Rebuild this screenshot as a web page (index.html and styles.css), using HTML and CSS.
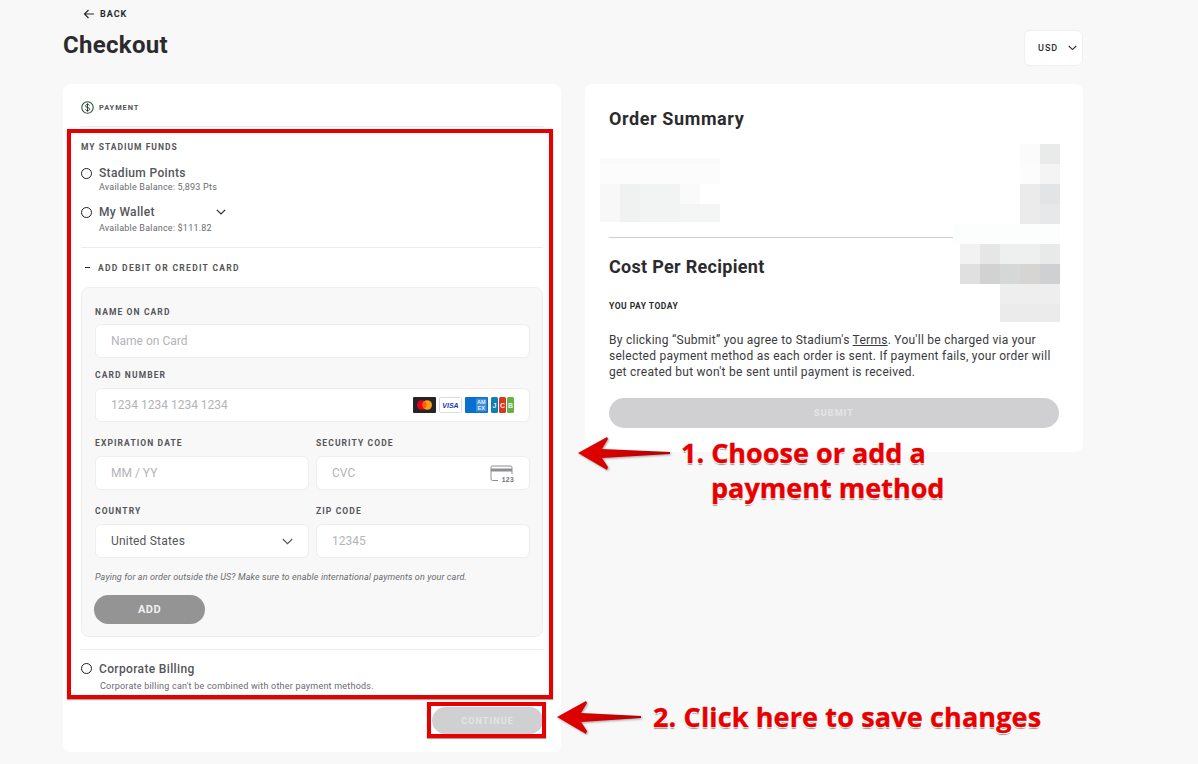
FILE: index.html
```html
<!DOCTYPE html>
<html lang="en">
    <head>
        <meta charset="UTF-8">
        <meta name="viewport" content="width=device-width, initial-scale=1.0">
        <title>Checkout</title>
        <link rel="stylesheet" href="styles.css">
    </head>
    <body>
        <div class="page">
            <a class="back-link" href="#">
                <svg width="12" height="12" viewBox="0 0 12 12" fill="none" stroke="#2b2b2e" stroke-width="1.2"><path d="M11 6H1.5M5.5 2L1.5 6l4 4"/></svg>
                BACK
            </a>
            <div class="page-header">
                <h1>Checkout</h1>
                <div class="currency">
                    USD
                    <svg width="9" height="6" viewBox="0 0 9 6" fill="none" stroke="#2b2b2e" stroke-width="1.1"><path d="M.8 1l3.7 3.6L8.2 1"/></svg>
                </div>
            </div>

            <div class="columns">
                <section class="card payment-card">
                    <div class="payment-head">
                        <svg width="13" height="13" viewBox="0 0 13 13" fill="none"><circle cx="6.5" cy="6.5" r="5.7" stroke="#1f5c3a" stroke-width="1.1"/><path d="M8.6 4.5C8.2 3.7 7.4 3.4 6.5 3.4c-1.1 0-2 .5-2 1.5 0 2.2 4.2 1 4.2 3.2 0 1-1 1.5-2.2 1.5-1 0-1.9-.4-2.2-1.2M6.5 2.3v8.4" stroke="#2b2b2e" stroke-width=".9"/></svg>
                        <span>PAYMENT</span>
                    </div>

                    <h3 class="funds-title">MY STADIUM FUNDS</h3>

                    <div class="option option-points">
                        <span class="radio"></span>
                        <div>
                            <div class="option-name">Stadium Points</div>
                            <div class="option-note">Available Balance: 5,893 Pts</div>
                        </div>
                    </div>

                    <div class="option option-wallet">
                        <span class="radio"></span>
                        <div>
                            <div class="option-name">My Wallet
                                <svg class="wallet-chevron" width="10" height="6" viewBox="0 0 10 6" fill="none" stroke="#2b2b2e" stroke-width="1.2"><path d="M.8.8L5 5l4.2-4.2"/></svg>
                            </div>
                            <div class="option-note wallet-note">Available Balance: $111.82</div>
                        </div>
                    </div>

                    <div class="add-card-toggle"><span class="minus"></span>ADD DEBIT OR CREDIT CARD</div>

                    <form class="card-panel">
                        <div class="field name-field">
                            <label>NAME ON CARD</label>
                            <div class="input placeholder">Name on Card</div>
                        </div>
                        <div class="field">
                            <label>CARD NUMBER</label>
                            <div class="input placeholder">
                                1234 1234 1234 1234
                                <div class="brands">
                                    <svg width="23" height="16" viewBox="0 0 23 16"><rect width="23" height="16" rx="1" fill="#252525"/><circle cx="8.8" cy="8" r="4.8" fill="#e8001c"/><circle cx="14.2" cy="8" r="4.8" fill="#f79e1b"/><path d="M11.5 4a4.8 4.8 0 0 1 0 8 4.8 4.800 0 0 1 0-8z" fill="#ff5f00"/></svg>
                                    <svg width="23" height="16" viewBox="0 0 23 16"><rect x=".5" y=".5" width="22" height="15" rx="1" fill="#fff" stroke="#ddd"/><text class="visa-mark" x="11.5" y="11">VISA</text></svg>
                                    <svg width="23" height="16" viewBox="0 0 23 16"><rect width="23" height="16" rx="1" fill="#0a70cf"/><rect x="11" y="1.5" width="10.500" height="13" fill="#3f8fdc"/><text class="amex-mark" x="16.200" y="7.200">AM</text><text class="amex-mark" x="16.200" y="13">EX</text></svg>
                                    <svg width="23" height="16" viewBox="0 0 23 16"><rect width="7" height="16" rx="1.5" fill="#0f7fb5"/><rect x="8" width="7" height="16" rx="1.5" fill="#d9381e"/><rect x="16" width="7" height="16" rx="1.5" fill="#64b245"/><text class="jcb-mark" x="3.500" y="10.500">J</text><text class="jcb-mark" x="11.500" y="10.500">C</text><text class="jcb-mark" x="19.500" y="10.500">B</text></svg>
                                </div>
                            </div>
                        </div>
                        <div class="field-row">
                            <div class="field">
                                <label>EXPIRATION DATE</label>
                                <div class="input placeholder">MM / YY</div>
                            </div>
                            <div class="field">
                                <label>SECURITY CODE</label>
                                <div class="input placeholder">
                                    CVC
                                    <svg class="cvc-icon" width="24" height="17" viewBox="0 0 24 17" fill="none"><path d="M8 15.5H2.500a1.500 1.500 0 0 1-1.500-1.500V2.500A1.500 1.500 0 0 1 2.500 1h18A1.500 1.500 0 0 1 22 2.500V9" stroke="#8d8d92"/><rect x="1" y="3.5" width="21" height="3" fill="#8d8d92"/><text class="cvc-digits" x="24" y="16.5">123</text></svg>
                                </div>
                            </div>
                        </div>
                        <div class="field-row">
                            <div class="field">
                                <label>COUNTRY</label>
                                <div class="input">
                                    United States
                                    <svg class="select-chevron" width="11" height="7" viewBox="0 0 11 7" fill="none" stroke="#55555a" stroke-width="1.1"><path d="M.8 1l4.7 4.7L10.200 1"/></svg>
                                </div>
                            </div>
                            <div class="field">
                                <label>ZIP CODE</label>
                                <div class="input placeholder">12345</div>
                            </div>
                        </div>
                        <p class="intl-note">Paying for an order outside the US? Make sure to enable international payments on your card.</p>
                        <button type="button" class="add-btn">ADD</button>
                    </form>

                    <div class="option option-corporate">
                        <span class="radio"></span>
                        <div class="option-name">Corporate Billing</div>
                    </div>
                    <div class="corporate-note">Corporate billing can't be combined with other payment methods.</div>

                    <div class="continue-row">
                        <button type="button" class="continue-btn">CONTINUE</button>
                    </div>
                </section>

                <section class="card summary-card">
                    <h2 class="summary-title">Order Summary</h2>
                    <hr class="summary-rule">
                    <h2 class="cost-title">Cost Per Recipient</h2>
                    <div class="pay-today">YOU PAY TODAY</div>
                    <p class="terms">By clicking “Submit” you agree to Stadium's <u>Terms</u>. You'll be charged via your selected payment method as each order is sent. If payment fails, your order will get created but won't be sent until payment is received.</p>
                    <button type="button" class="submit-btn">SUBMIT</button>
                </section>
            </div>
        </div>

        <!-- annotations drawn on top of the screenshot -->
        <svg class="mosaic" width="1198" height="764" viewBox="0 0 1198 764">
            <g>
                <rect x="600" y="158" width="120" height="6" fill="#fafafa"/>
                <rect x="600" y="164" width="120" height="20" fill="#fcfcfc"/>
                <rect x="600" y="184" width="20" height="38" fill="#f8f8f8"/>
                <rect x="620" y="184" width="20" height="38" fill="#f0f1f1"/>
                <rect x="640" y="184" width="40" height="38" fill="#f2f3f3"/>
                <rect x="680" y="184" width="20" height="20" fill="#fafafa"/>
                <rect x="680" y="204" width="40" height="18" fill="#f4f5f5"/>
            </g>
            <g>
                <rect x="1020" y="144" width="20" height="20" fill="#fbfbfb"/>
                <rect x="1040" y="144" width="20" height="20" fill="#e9eaea"/>
                <rect x="1020" y="164" width="20" height="20" fill="#fcfcfc"/>
                <rect x="1040" y="164" width="20" height="20" fill="#f4f4f4"/>
                <rect x="1020" y="184" width="20" height="40" fill="#ebebeb"/>
                <rect x="1040" y="184" width="20" height="20" fill="#e3e4e6"/>
                <rect x="1040" y="204" width="20" height="20" fill="#e7e8ea"/>
                <rect x="953" y="224" width="107" height="20" fill="#fcfdfd"/>
            </g>
            <g>
                <rect x="960" y="244" width="20" height="20" fill="#f2f2f2"/>
                <rect x="980" y="244" width="20" height="20" fill="#e6e6e6"/>
                <rect x="1000" y="244" width="40" height="20" fill="#eeefef"/>
                <rect x="1040" y="244" width="20" height="20" fill="#e8e9e9"/>
                <rect x="960" y="264" width="20" height="20" fill="#e0e0e0"/>
                <rect x="980" y="264" width="20" height="20" fill="#d2d2d2"/>
                <rect x="1000" y="264" width="20" height="20" fill="#d6d7d7"/>
                <rect x="1020" y="264" width="20" height="20" fill="#d6d5d4"/>
                <rect x="1040" y="264" width="20" height="20" fill="#cfd0d2"/>
                <rect x="1000" y="284" width="60" height="20" fill="#eeeeee"/>
                <rect x="1000" y="304" width="60" height="18" fill="#ebebeb"/>
            </g>
        </svg>

        <div class="callout-frame frame-methods"></div>
        <div class="callout-frame frame-continue"></div>

        <svg class="callout-arrow arrow-methods" width="96" height="36" viewBox="0 0 96 36">
            <defs>
                <linearGradient id="arrowRed" x1="0" x2="1" y1="0" y2="0"><stop offset="0" stop-color="#e60000"/><stop offset="1" stop-color="#b50000"/></linearGradient>
            </defs>
            <path d="M1 17L30 1l1 2-6 10 68 3v2l-68 4 6 9-1 3z" fill="url(#arrowRed)"/>
        </svg>
        <svg class="callout-arrow arrow-continue" width="90" height="36" viewBox="0 0 90 36">
            <path d="M1 17L30 1l1 2-6 10 60 3v2l-60 4 6 9-1 3z" fill="url(#arrowRed)"/>
        </svg>

        <div class="callout-text text-methods">1. Choose or add a<br><span class="callout-indent">payment method</span></div>
        <div class="callout-text text-continue">2. Click here to save changes</div>
    </body>
</html>
```

FILE: styles.css
```css
:root {
    --ink: #2b2b2e;
    --muted: #55555a;
    --line: #ececec;
    --page-bg: #f8f8f8;
    --field-line: #eeeeee;
    --placeholder: #b4b4b8;
    --disabled: #d0d0d2;
    --callout: #e60000;
}

* {
    margin: 0;
    padding: 0;
    box-sizing: border-box;
}

body {
    font-family: Roboto, 'Liberation Sans', sans-serif;
    background-color: var(--page-bg);
    color: var(--ink);
    min-height: 764px;
    overflow: hidden;
}

.page {
    width: 1020px;
    margin-left: 63px;
}

.back-link {
    display: flex;
    align-items: center;
    gap: 5px;
    height: 28px;
    padding-left: 20px;
    font-size: 9px;
    font-weight: 700;
    letter-spacing: 1px;
    color: var(--ink);
    text-decoration: none;
}

.page-header {
    display: flex;
    justify-content: space-between;
    align-items: flex-start;
    height: 56px;
}

.page-header h1 {
    font-size: 24px;
    line-height: 34px;
    font-weight: 700;
    letter-spacing: 0.3px;
}

.currency {
    display: flex;
    align-items: center;
    gap: 10px;
    width: 59px;
    height: 36px;
    margin-top: 2px;
    padding-left: 13px;
    background: white;
    border: 1px solid #f0f0f0;
    border-radius: 6px;
    font-size: 9px;
    font-weight: 500;
    letter-spacing: 1px;
}

.columns {
    display: flex;
    align-items: flex-start;
    gap: 24px;
}

.card {
    width: 498px;
    background: white;
    border-radius: 8px;
}

/* left column */
.payment-card {
    height: 668px;
    padding: 0 18px;
}

.payment-head {
    display: flex;
    align-items: center;
    gap: 5px;
    height: 43px;
    padding-top: 4px;
    border-bottom: 1px solid var(--line);
    font-size: 7.5px;
    font-weight: 700;
    letter-spacing: 0.9px;
    color: var(--muted);
}

.funds-title {
    margin-top: 14px;
    font-size: 8.5px;
    line-height: 12px;
    font-weight: 700;
    letter-spacing: 1px;
    color: var(--muted);
}

.option {
    display: flex;
    align-items: flex-start;
    gap: 7px;
}

.option-points {
    margin-top: 12px;
}

.option-wallet {
    margin-top: 11px;
    padding-bottom: 13px;
    border-bottom: 1px solid var(--line);
}

.radio {
    flex: none;
    width: 11px;
    height: 11px;
    margin-top: 3px;
    border: 1px solid #1f1f22;
    border-radius: 50%;
}

.option-name {
    display: flex;
    align-items: center;
    font-size: 12px;
    line-height: 16px;
    font-weight: 500;
    letter-spacing: 0.35px;
    color: var(--muted);
}

.wallet-chevron {
    margin-left: 61px;
}

.option-note {
    font-size: 9px;
    line-height: 12px;
    letter-spacing: 0.2px;
    color: #6a6a6f;
}

.wallet-note {
    margin-top: 2px;
}

.add-card-toggle {
    display: flex;
    align-items: center;
    height: 39px;
    font-size: 8.5px;
    font-weight: 700;
    letter-spacing: 1.3px;
    color: var(--muted);
}

.minus {
    width: 5px;
    height: 1px;
    margin: 0 8px 0 4px;
    background: var(--ink);
}

.card-panel {
    width: 462px;
    height: 350px;
    padding: 18px 12px 0 13px;
    background: var(--page-bg);
    border: 1px solid var(--field-line);
    border-radius: 8px;
}

.field label {
    display: block;
    font-size: 8.5px;
    line-height: 12px;
    font-weight: 700;
    letter-spacing: 1.1px;
    color: var(--muted);
}

.field + .field {
    margin-top: 11px;
}

.field-row {
    display: grid;
    grid-template-columns: 214px 214px;
    gap: 7px;
    margin-top: 15px;
}

.field-row .field + .field {
    margin-top: 0;
}

.input {
    display: flex;
    align-items: center;
    height: 34px;
    margin-top: 7px;
    padding: 0 15px;
    background: white;
    border: 1px solid var(--field-line);
    border-radius: 6px;
    font-size: 12px;
    letter-spacing: 0.2px;
    color: var(--muted);
}

.name-field .input {
    margin-top: 6px;
}

.input.placeholder {
    color: var(--placeholder);
    letter-spacing: 0;
}

.brands {
    display: flex;
    gap: 3px;
    margin-left: auto;
}

.brands svg {
    display: block;
}

.visa-mark {
    font: italic 700 7px 'Liberation Sans', sans-serif;
    fill: #1a34b8;
    text-anchor: middle;
}

.amex-mark {
    font: 700 5.500px 'Liberation Sans', sans-serif;
    fill: #e4f0fb;
    text-anchor: middle;
}

.jcb-mark {
    font: 700 7px 'Liberation Sans', sans-serif;
    fill: #e8f2f7;
    text-anchor: middle;
}

.cvc-icon {
    margin-left: auto;
    overflow: visible;
}

.cvc-digits {
    font: 700 7px 'Liberation Mono', monospace;
    fill: #77777c;
    text-anchor: end;
    paint-order: stroke;
    stroke: white;
    stroke-width: 2px;
}

.select-chevron {
    margin-left: auto;
}

.intl-note {
    margin-top: 13px;
    font-size: 9px;
    line-height: 12px;
    font-style: italic;
    letter-spacing: 0.12px;
    color: #6a6a6f;
}

.add-btn {
    display: block;
    width: 111px;
    height: 29px;
    margin: 12px 0 0 -1px;
    border: none;
    border-radius: 15px;
    background: #949494;
    color: #f0f0f0;
    font: 700 11px Roboto, sans-serif;
    letter-spacing: 0.4px;
}

.option-corporate {
    align-items: flex-start;
    margin-top: 12px;
    padding-top: 11px;
    border-top: 1px solid var(--line);
}

.option-corporate .radio {
    margin-top: 2px;
}

.corporate-note {
    margin: 3px 0 0 19px;
    font-size: 9px;
    line-height: 12px;
    letter-spacing: 0.22px;
    color: #6a6a6f;
}

.continue-row {
    display: flex;
    justify-content: flex-end;
    margin-top: 15px;
}

.continue-btn {
    width: 111px;
    height: 27px;
    border: none;
    border-radius: 14px;
    background: var(--disabled);
    color: #e4e4e6;
    font: 700 9px Roboto, sans-serif;
    letter-spacing: 1.1px;
}

/* right column */
.summary-card {
    height: 368px;
    padding: 24px;
}

.summary-title,
.cost-title {
    font-size: 18px;
    line-height: 22px;
    font-weight: 700;
    letter-spacing: 0.3px;
}

.summary-title {
    letter-spacing: 0.6px;
}

.summary-rule {
    height: 1px;
    margin-top: 107px;
    border: none;
    background: #cfcfcf;
}

.cost-title {
    margin-top: 18px;
}

.pay-today {
    margin-top: 22px;
    font-size: 8.5px;
    line-height: 12px;
    font-weight: 700;
    letter-spacing: 0.5px;
}

.terms {
    margin-top: 20px;
    font-size: 12px;
    line-height: 16px;
    letter-spacing: 0.26px;
    color: #3a3a3e;
}

.submit-btn {
    display: block;
    width: 450px;
    height: 30px;
    margin-top: 18px;
    border: none;
    border-radius: 15px;
    background: var(--disabled);
    color: #e4e4e6;
    font: 700 9px Roboto, sans-serif;
    letter-spacing: 1.1px;
}

/* overlays on the screenshot */
.mosaic {
    position: absolute;
    left: 0;
    top: 0;
    pointer-events: none;
}

.callout-frame {
    position: absolute;
    border: 4px solid var(--callout);
    box-shadow: 0 1px 1px rgba(0, 0, 0, 0.35);
}

.frame-methods {
    left: 67px;
    top: 129px;
    width: 486px;
    height: 570px;
}

.frame-continue {
    left: 427px;
    top: 702px;
    width: 119px;
    height: 36px;
}

.callout-arrow {
    position: absolute;
    filter: drop-shadow(1px 1px 1px rgba(0, 0, 0, 0.35));
}

.arrow-methods {
    left: 577px;
    top: 436px;
}

.arrow-continue {
    left: 556px;
    top: 700px;
}

.callout-text {
    position: absolute;
    font-family: 'Open Sans', 'Noto Sans', sans-serif;
    font-size: 27px;
    line-height: 35px;
    font-weight: 700;
    white-space: nowrap;
    color: var(--callout);
    -webkit-text-stroke: 0.4px var(--callout);
    text-shadow: -1px -1px 0 white, 1px -1px 0 white, -1px 1px 0 white, 1px 1px 0 white, 0 2px 1px #9a9a9a;
}

.callout-indent {
    margin-left: 30px;
}

.text-methods {
    left: 681px;
    top: 435px;
}

.text-continue {
    left: 653px;
    top: 699px;
    letter-spacing: 0.14px;
}
```
